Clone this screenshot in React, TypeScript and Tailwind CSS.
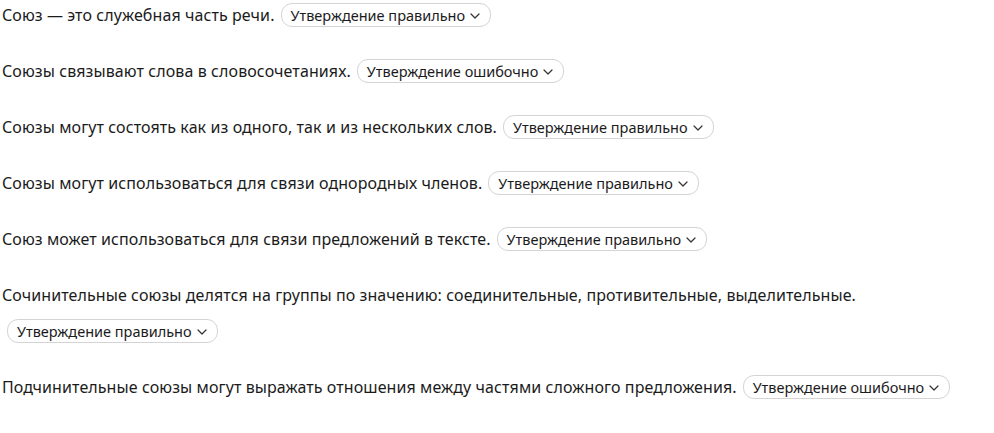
import React from "react";

const rows: { text: string; answer: string }[] = [
  { text: "Союз — это служебная часть речи.", answer: "Утверждение правильно" },
  { text: "Союзы связывают слова в словосочетаниях.", answer: "Утверждение ошибочно" },
  { text: "Союзы могут состоять как из одного, так и из нескольких слов.", answer: "Утверждение правильно" },
  { text: "Союзы могут использоваться для связи однородных членов.", answer: "Утверждение правильно" },
  { text: "Союз может использоваться для связи предложений в тексте.", answer: "Утверждение правильно" },
  {
    text: "Сочинительные союзы делятся на группы по значению: соединительные, противительные, выделительные.",
    answer: "Утверждение правильно",
  },
  {
    text: "Подчинительные союзы могут выражать отношения между частями сложного предложения.",
    answer: "Утверждение ошибочно",
  },
];

function Chevron() {
  return (
    <svg width="10" height="6" viewBox="0 0 10 6" fill="none" className="ml-[5px] mt-[2px]">
      <path d="M1 1l4 4 4-4" stroke="#333" strokeWidth="1.2" strokeLinecap="round" strokeLinejoin="round" />
    </svg>
  );
}

export default function App() {
  return (
    <div
      className="min-h-[433px] w-[994px] bg-white pl-[2px] pt-[3px] text-[#1b1b1b]"
      style={{ fontFamily: '"Noto Sans", "Open Sans", sans-serif' }}
    >
      {rows.map((r, i) => (
        <div key={i} className="mb-[32px] flex flex-wrap items-center gap-x-[1px] gap-y-[12px]">
          <span className="text-[16px] leading-[24px] tracking-[0.09px]">{r.text}</span>
          <button className="ml-[5px] flex h-[24px] items-center rounded-[11px] border border-[#d4d4d4] bg-white pl-[9px] pr-[10px] text-[14.5px] leading-[22px] text-[#1b1b1b]">
            {r.answer}
            <Chevron />
          </button>
        </div>
      ))}
    </div>
  );
}
